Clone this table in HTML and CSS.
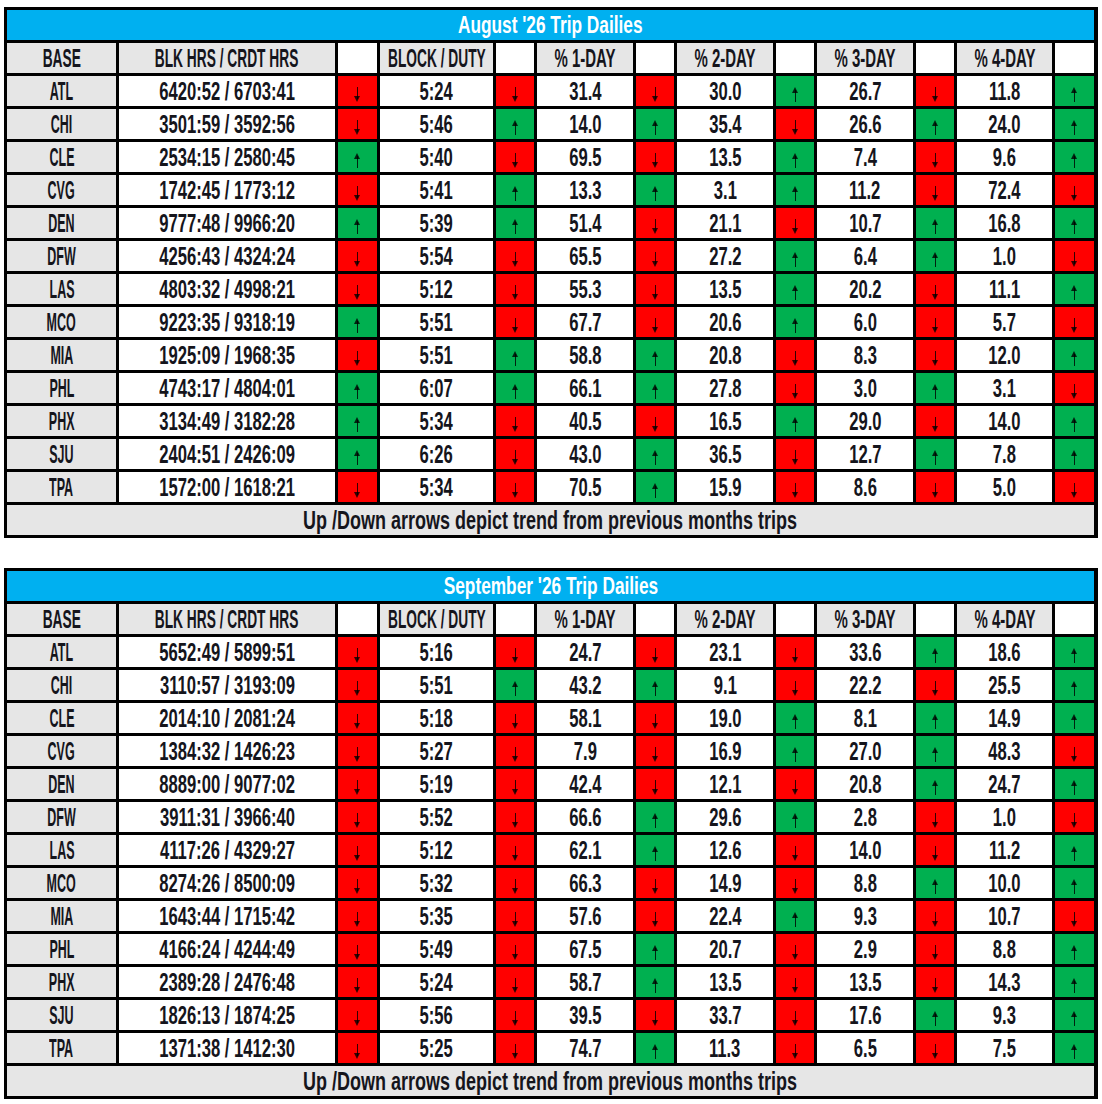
FILE: index.html
```html
<!DOCTYPE html>
<html lang="en">
<head>
<meta charset="utf-8">
<title>Trip Dailies</title>
<link rel="stylesheet" href="styles.css">
</head>
<body>
<main class="page">

<section class="sheet">
  <div class="title"><span>August '26 Trip Dailies</span></div>
  <div class="hd"><span>BASE</span></div><div class="hd"><span>BLK HRS / CRDT HRS</span></div><div class="blank"></div><div class="hd"><span>BLOCK / DUTY</span></div><div class="blank"></div><div class="hd pc"><span>% 1-DAY</span></div><div class="blank"></div><div class="hd pc"><span>% 2-DAY</span></div><div class="blank"></div><div class="hd pc"><span>% 3-DAY</span></div><div class="blank"></div><div class="hd pc"><span>% 4-DAY</span></div><div class="blank"></div>

  <div class="lb"><span>ATL</span></div><div class="v"><span>6420:52 / 6703:41</span></div><div class="ar dn"><i></i></div><div class="v"><span>5:24</span></div><div class="ar dn"><i></i></div><div class="v"><span>31.4</span></div><div class="ar dn"><i></i></div><div class="v"><span>30.0</span></div><div class="ar up"><i></i></div><div class="v"><span>26.7</span></div><div class="ar dn"><i></i></div><div class="v"><span>11.8</span></div><div class="ar up"><i></i></div>
  <div class="lb"><span>CHI</span></div><div class="v"><span>3501:59 / 3592:56</span></div><div class="ar dn"><i></i></div><div class="v"><span>5:46</span></div><div class="ar up"><i></i></div><div class="v"><span>14.0</span></div><div class="ar up"><i></i></div><div class="v"><span>35.4</span></div><div class="ar dn"><i></i></div><div class="v"><span>26.6</span></div><div class="ar up"><i></i></div><div class="v"><span>24.0</span></div><div class="ar up"><i></i></div>
  <div class="lb"><span>CLE</span></div><div class="v"><span>2534:15 / 2580:45</span></div><div class="ar up"><i></i></div><div class="v"><span>5:40</span></div><div class="ar dn"><i></i></div><div class="v"><span>69.5</span></div><div class="ar dn"><i></i></div><div class="v"><span>13.5</span></div><div class="ar up"><i></i></div><div class="v"><span>7.4</span></div><div class="ar dn"><i></i></div><div class="v"><span>9.6</span></div><div class="ar up"><i></i></div>
  <div class="lb"><span>CVG</span></div><div class="v"><span>1742:45 / 1773:12</span></div><div class="ar dn"><i></i></div><div class="v"><span>5:41</span></div><div class="ar up"><i></i></div><div class="v"><span>13.3</span></div><div class="ar up"><i></i></div><div class="v"><span>3.1</span></div><div class="ar up"><i></i></div><div class="v"><span>11.2</span></div><div class="ar dn"><i></i></div><div class="v"><span>72.4</span></div><div class="ar dn"><i></i></div>
  <div class="lb"><span>DEN</span></div><div class="v"><span>9777:48 / 9966:20</span></div><div class="ar up"><i></i></div><div class="v"><span>5:39</span></div><div class="ar up"><i></i></div><div class="v"><span>51.4</span></div><div class="ar dn"><i></i></div><div class="v"><span>21.1</span></div><div class="ar dn"><i></i></div><div class="v"><span>10.7</span></div><div class="ar up"><i></i></div><div class="v"><span>16.8</span></div><div class="ar up"><i></i></div>
  <div class="lb"><span>DFW</span></div><div class="v"><span>4256:43 / 4324:24</span></div><div class="ar dn"><i></i></div><div class="v"><span>5:54</span></div><div class="ar dn"><i></i></div><div class="v"><span>65.5</span></div><div class="ar dn"><i></i></div><div class="v"><span>27.2</span></div><div class="ar up"><i></i></div><div class="v"><span>6.4</span></div><div class="ar up"><i></i></div><div class="v"><span>1.0</span></div><div class="ar dn"><i></i></div>
  <div class="lb"><span>LAS</span></div><div class="v"><span>4803:32 / 4998:21</span></div><div class="ar dn"><i></i></div><div class="v"><span>5:12</span></div><div class="ar dn"><i></i></div><div class="v"><span>55.3</span></div><div class="ar dn"><i></i></div><div class="v"><span>13.5</span></div><div class="ar up"><i></i></div><div class="v"><span>20.2</span></div><div class="ar dn"><i></i></div><div class="v"><span>11.1</span></div><div class="ar up"><i></i></div>
  <div class="lb"><span>MCO</span></div><div class="v"><span>9223:35 / 9318:19</span></div><div class="ar up"><i></i></div><div class="v"><span>5:51</span></div><div class="ar dn"><i></i></div><div class="v"><span>67.7</span></div><div class="ar dn"><i></i></div><div class="v"><span>20.6</span></div><div class="ar up"><i></i></div><div class="v"><span>6.0</span></div><div class="ar dn"><i></i></div><div class="v"><span>5.7</span></div><div class="ar dn"><i></i></div>
  <div class="lb"><span>MIA</span></div><div class="v"><span>1925:09 / 1968:35</span></div><div class="ar dn"><i></i></div><div class="v"><span>5:51</span></div><div class="ar up"><i></i></div><div class="v"><span>58.8</span></div><div class="ar up"><i></i></div><div class="v"><span>20.8</span></div><div class="ar dn"><i></i></div><div class="v"><span>8.3</span></div><div class="ar dn"><i></i></div><div class="v"><span>12.0</span></div><div class="ar up"><i></i></div>
  <div class="lb"><span>PHL</span></div><div class="v"><span>4743:17 / 4804:01</span></div><div class="ar up"><i></i></div><div class="v"><span>6:07</span></div><div class="ar up"><i></i></div><div class="v"><span>66.1</span></div><div class="ar up"><i></i></div><div class="v"><span>27.8</span></div><div class="ar dn"><i></i></div><div class="v"><span>3.0</span></div><div class="ar up"><i></i></div><div class="v"><span>3.1</span></div><div class="ar dn"><i></i></div>
  <div class="lb"><span>PHX</span></div><div class="v"><span>3134:49 / 3182:28</span></div><div class="ar up"><i></i></div><div class="v"><span>5:34</span></div><div class="ar dn"><i></i></div><div class="v"><span>40.5</span></div><div class="ar dn"><i></i></div><div class="v"><span>16.5</span></div><div class="ar up"><i></i></div><div class="v"><span>29.0</span></div><div class="ar dn"><i></i></div><div class="v"><span>14.0</span></div><div class="ar up"><i></i></div>
  <div class="lb"><span>SJU</span></div><div class="v"><span>2404:51 / 2426:09</span></div><div class="ar up"><i></i></div><div class="v"><span>6:26</span></div><div class="ar dn"><i></i></div><div class="v"><span>43.0</span></div><div class="ar up"><i></i></div><div class="v"><span>36.5</span></div><div class="ar dn"><i></i></div><div class="v"><span>12.7</span></div><div class="ar up"><i></i></div><div class="v"><span>7.8</span></div><div class="ar up"><i></i></div>
  <div class="lb"><span>TPA</span></div><div class="v"><span>1572:00 / 1618:21</span></div><div class="ar dn"><i></i></div><div class="v"><span>5:34</span></div><div class="ar dn"><i></i></div><div class="v"><span>70.5</span></div><div class="ar up"><i></i></div><div class="v"><span>15.9</span></div><div class="ar dn"><i></i></div><div class="v"><span>8.6</span></div><div class="ar dn"><i></i></div><div class="v"><span>5.0</span></div><div class="ar dn"><i></i></div>

  <div class="foot"><span>Up /Down arrows depict trend from previous months trips</span></div>
</section>

<section class="sheet">
  <div class="title"><span>September '26 Trip Dailies</span></div>
  <div class="hd"><span>BASE</span></div><div class="hd"><span>BLK HRS / CRDT HRS</span></div><div class="blank"></div><div class="hd"><span>BLOCK / DUTY</span></div><div class="blank"></div><div class="hd pc"><span>% 1-DAY</span></div><div class="blank"></div><div class="hd pc"><span>% 2-DAY</span></div><div class="blank"></div><div class="hd pc"><span>% 3-DAY</span></div><div class="blank"></div><div class="hd pc"><span>% 4-DAY</span></div><div class="blank"></div>

  <div class="lb"><span>ATL</span></div><div class="v"><span>5652:49 / 5899:51</span></div><div class="ar dn"><i></i></div><div class="v"><span>5:16</span></div><div class="ar dn"><i></i></div><div class="v"><span>24.7</span></div><div class="ar dn"><i></i></div><div class="v"><span>23.1</span></div><div class="ar dn"><i></i></div><div class="v"><span>33.6</span></div><div class="ar up"><i></i></div><div class="v"><span>18.6</span></div><div class="ar up"><i></i></div>
  <div class="lb"><span>CHI</span></div><div class="v"><span>3110:57 / 3193:09</span></div><div class="ar dn"><i></i></div><div class="v"><span>5:51</span></div><div class="ar up"><i></i></div><div class="v"><span>43.2</span></div><div class="ar up"><i></i></div><div class="v"><span>9.1</span></div><div class="ar dn"><i></i></div><div class="v"><span>22.2</span></div><div class="ar dn"><i></i></div><div class="v"><span>25.5</span></div><div class="ar up"><i></i></div>
  <div class="lb"><span>CLE</span></div><div class="v"><span>2014:10 / 2081:24</span></div><div class="ar dn"><i></i></div><div class="v"><span>5:18</span></div><div class="ar dn"><i></i></div><div class="v"><span>58.1</span></div><div class="ar dn"><i></i></div><div class="v"><span>19.0</span></div><div class="ar up"><i></i></div><div class="v"><span>8.1</span></div><div class="ar up"><i></i></div><div class="v"><span>14.9</span></div><div class="ar up"><i></i></div>
  <div class="lb"><span>CVG</span></div><div class="v"><span>1384:32 / 1426:23</span></div><div class="ar dn"><i></i></div><div class="v"><span>5:27</span></div><div class="ar dn"><i></i></div><div class="v"><span>7.9</span></div><div class="ar dn"><i></i></div><div class="v"><span>16.9</span></div><div class="ar up"><i></i></div><div class="v"><span>27.0</span></div><div class="ar up"><i></i></div><div class="v"><span>48.3</span></div><div class="ar dn"><i></i></div>
  <div class="lb"><span>DEN</span></div><div class="v"><span>8889:00 / 9077:02</span></div><div class="ar dn"><i></i></div><div class="v"><span>5:19</span></div><div class="ar dn"><i></i></div><div class="v"><span>42.4</span></div><div class="ar dn"><i></i></div><div class="v"><span>12.1</span></div><div class="ar dn"><i></i></div><div class="v"><span>20.8</span></div><div class="ar up"><i></i></div><div class="v"><span>24.7</span></div><div class="ar up"><i></i></div>
  <div class="lb"><span>DFW</span></div><div class="v"><span>3911:31 / 3966:40</span></div><div class="ar dn"><i></i></div><div class="v"><span>5:52</span></div><div class="ar dn"><i></i></div><div class="v"><span>66.6</span></div><div class="ar up"><i></i></div><div class="v"><span>29.6</span></div><div class="ar up"><i></i></div><div class="v"><span>2.8</span></div><div class="ar dn"><i></i></div><div class="v"><span>1.0</span></div><div class="ar dn"><i></i></div>
  <div class="lb"><span>LAS</span></div><div class="v"><span>4117:26 / 4329:27</span></div><div class="ar dn"><i></i></div><div class="v"><span>5:12</span></div><div class="ar dn"><i></i></div><div class="v"><span>62.1</span></div><div class="ar up"><i></i></div><div class="v"><span>12.6</span></div><div class="ar dn"><i></i></div><div class="v"><span>14.0</span></div><div class="ar dn"><i></i></div><div class="v"><span>11.2</span></div><div class="ar up"><i></i></div>
  <div class="lb"><span>MCO</span></div><div class="v"><span>8274:26 / 8500:09</span></div><div class="ar dn"><i></i></div><div class="v"><span>5:32</span></div><div class="ar dn"><i></i></div><div class="v"><span>66.3</span></div><div class="ar dn"><i></i></div><div class="v"><span>14.9</span></div><div class="ar dn"><i></i></div><div class="v"><span>8.8</span></div><div class="ar up"><i></i></div><div class="v"><span>10.0</span></div><div class="ar up"><i></i></div>
  <div class="lb"><span>MIA</span></div><div class="v"><span>1643:44 / 1715:42</span></div><div class="ar dn"><i></i></div><div class="v"><span>5:35</span></div><div class="ar dn"><i></i></div><div class="v"><span>57.6</span></div><div class="ar dn"><i></i></div><div class="v"><span>22.4</span></div><div class="ar up"><i></i></div><div class="v"><span>9.3</span></div><div class="ar dn"><i></i></div><div class="v"><span>10.7</span></div><div class="ar dn"><i></i></div>
  <div class="lb"><span>PHL</span></div><div class="v"><span>4166:24 / 4244:49</span></div><div class="ar dn"><i></i></div><div class="v"><span>5:49</span></div><div class="ar dn"><i></i></div><div class="v"><span>67.5</span></div><div class="ar up"><i></i></div><div class="v"><span>20.7</span></div><div class="ar dn"><i></i></div><div class="v"><span>2.9</span></div><div class="ar dn"><i></i></div><div class="v"><span>8.8</span></div><div class="ar up"><i></i></div>
  <div class="lb"><span>PHX</span></div><div class="v"><span>2389:28 / 2476:48</span></div><div class="ar dn"><i></i></div><div class="v"><span>5:24</span></div><div class="ar dn"><i></i></div><div class="v"><span>58.7</span></div><div class="ar up"><i></i></div><div class="v"><span>13.5</span></div><div class="ar dn"><i></i></div><div class="v"><span>13.5</span></div><div class="ar dn"><i></i></div><div class="v"><span>14.3</span></div><div class="ar up"><i></i></div>
  <div class="lb"><span>SJU</span></div><div class="v"><span>1826:13 / 1874:25</span></div><div class="ar dn"><i></i></div><div class="v"><span>5:56</span></div><div class="ar dn"><i></i></div><div class="v"><span>39.5</span></div><div class="ar dn"><i></i></div><div class="v"><span>33.7</span></div><div class="ar dn"><i></i></div><div class="v"><span>17.6</span></div><div class="ar up"><i></i></div><div class="v"><span>9.3</span></div><div class="ar up"><i></i></div>
  <div class="lb"><span>TPA</span></div><div class="v"><span>1371:38 / 1412:30</span></div><div class="ar dn"><i></i></div><div class="v"><span>5:25</span></div><div class="ar dn"><i></i></div><div class="v"><span>74.7</span></div><div class="ar up"><i></i></div><div class="v"><span>11.3</span></div><div class="ar dn"><i></i></div><div class="v"><span>6.5</span></div><div class="ar dn"><i></i></div><div class="v"><span>7.5</span></div><div class="ar up"><i></i></div>

  <div class="foot"><span>Up /Down arrows depict trend from previous months trips</span></div>
</section>

</main>
</body>
</html>
```

FILE: styles.css
```css
html, body {
  margin: 0;
  padding: 0;
  background: #ffffff;
}

.page {
  padding: 7px 0 0 4px;
  display: flex;
  flex-direction: column;
  gap: 30px;
  font-family: "Liberation Sans", Arial, sans-serif;
  font-weight: 700;
  color: #15151c;
}

.sheet {
  width: 1094px;
  box-sizing: border-box;
  background: #000000;
  padding: 3px 4px 3px 3px;
  display: grid;
  grid-template-columns: 109px 216px 39px 113px 38px 96px 38px 96px 38px 96px 38px 95px 39px;
  grid-auto-rows: 30px;
  gap: 3px;
}

.sheet > div {
  display: flex;
  align-items: center;
  justify-content: center;
  font-size: 25px;
  line-height: 1;
  white-space: nowrap;
}

.sheet > div > span {
  display: inline-block;
  flex-shrink: 0;
  transform-origin: 50% 50%;
}

.title {
  grid-column: 1 / -1;
  background: #00b0f0;
  color: #ffffff;
}

.title > span {
  font-size: 24px;
  transform: scaleX(0.72);
}

.hd {
  background: #e6e6e6;
}

.hd > span {
  transform: scaleX(0.55);
}

.hd.pc > span {
  transform: scaleX(0.6);
}

.blank {
  background: #ffffff;
}

.lb {
  background: #e6e6e6;
}

.lb > span {
  transform: scaleX(0.5);
}

.v {
  background: #ffffff;
}

.v > span {
  transform: scaleX(0.665);
}

.foot {
  grid-column: 1 / -1;
  background: #e6e6e6;
}

.foot > span {
  transform: scaleX(0.72);
}

.sheet > .ar {
  align-items: flex-end;
  padding-bottom: 4px;
  box-sizing: border-box;
}

.ar.dn {
  background: #ff0000;
}

.ar.up {
  background: #00b050;
}

.ar i {
  display: block;
  position: relative;
  width: 7px;
  height: 15px;
}

.ar i::before {
  content: "";
  position: absolute;
  left: 3px;
  width: 1px;
  background: rgba(0, 0, 0, 0.8);
}

.dn i::before {
  top: 0;
  bottom: 3px;
}

.up i::before {
  top: 3px;
  bottom: 0;
}

.ar i::after {
  content: "";
  position: absolute;
  left: 0;
  border-left: 3.5px solid transparent;
  border-right: 3.5px solid transparent;
}

.dn i::after {
  bottom: 0;
  border-top: 6px solid rgba(0, 0, 0, 0.8);
}

.up i::after {
  top: 0;
  border-bottom: 6px solid rgba(0, 0, 0, 0.8);
}
```
